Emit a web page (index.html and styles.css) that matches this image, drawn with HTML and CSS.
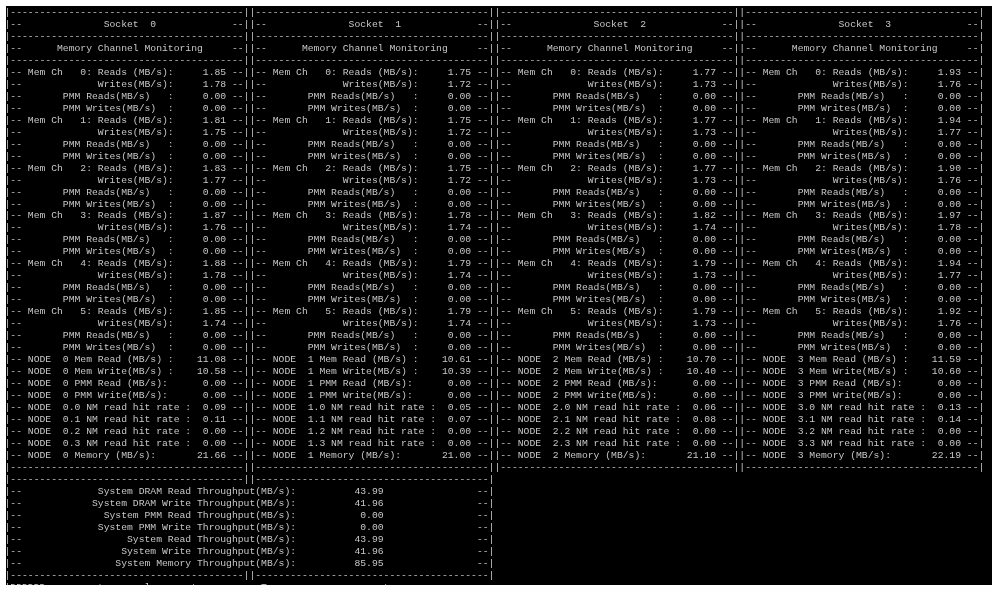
FILE: index.html
```html
<!DOCTYPE html>
<html lang="en">
<head>
<meta charset="utf-8">
<title>pcm-memory</title>
<link rel="stylesheet" href="styles.css">
</head>
<body>
<main class="screen">
<pre class="output">|----------------------------------------||----------------------------------------||----------------------------------------||----------------------------------------|
|--              Socket  0             --||--              Socket  1             --||--              Socket  2             --||--              Socket  3             --|
|----------------------------------------||----------------------------------------||----------------------------------------||----------------------------------------|
|--      Memory Channel Monitoring     --||--      Memory Channel Monitoring     --||--      Memory Channel Monitoring     --||--      Memory Channel Monitoring     --|
|----------------------------------------||----------------------------------------||----------------------------------------||----------------------------------------|
|-- Mem Ch   0: Reads (MB/s):     1.85 --||-- Mem Ch   0: Reads (MB/s):     1.75 --||-- Mem Ch   0: Reads (MB/s):     1.77 --||-- Mem Ch   0: Reads (MB/s):     1.93 --|
|--             Writes(MB/s):     1.78 --||--             Writes(MB/s):     1.72 --||--             Writes(MB/s):     1.73 --||--             Writes(MB/s):     1.76 --|
|--       PMM Reads(MB/s)   :     0.00 --||--       PMM Reads(MB/s)   :     0.00 --||--       PMM Reads(MB/s)   :     0.00 --||--       PMM Reads(MB/s)   :     0.00 --|
|--       PMM Writes(MB/s)  :     0.00 --||--       PMM Writes(MB/s)  :     0.00 --||--       PMM Writes(MB/s)  :     0.00 --||--       PMM Writes(MB/s)  :     0.00 --|
|-- Mem Ch   1: Reads (MB/s):     1.81 --||-- Mem Ch   1: Reads (MB/s):     1.75 --||-- Mem Ch   1: Reads (MB/s):     1.77 --||-- Mem Ch   1: Reads (MB/s):     1.94 --|
|--             Writes(MB/s):     1.75 --||--             Writes(MB/s):     1.72 --||--             Writes(MB/s):     1.73 --||--             Writes(MB/s):     1.77 --|
|--       PMM Reads(MB/s)   :     0.00 --||--       PMM Reads(MB/s)   :     0.00 --||--       PMM Reads(MB/s)   :     0.00 --||--       PMM Reads(MB/s)   :     0.00 --|
|--       PMM Writes(MB/s)  :     0.00 --||--       PMM Writes(MB/s)  :     0.00 --||--       PMM Writes(MB/s)  :     0.00 --||--       PMM Writes(MB/s)  :     0.00 --|
|-- Mem Ch   2: Reads (MB/s):     1.83 --||-- Mem Ch   2: Reads (MB/s):     1.75 --||-- Mem Ch   2: Reads (MB/s):     1.77 --||-- Mem Ch   2: Reads (MB/s):     1.90 --|
|--             Writes(MB/s):     1.77 --||--             Writes(MB/s):     1.72 --||--             Writes(MB/s):     1.73 --||--             Writes(MB/s):     1.76 --|
|--       PMM Reads(MB/s)   :     0.00 --||--       PMM Reads(MB/s)   :     0.00 --||--       PMM Reads(MB/s)   :     0.00 --||--       PMM Reads(MB/s)   :     0.00 --|
|--       PMM Writes(MB/s)  :     0.00 --||--       PMM Writes(MB/s)  :     0.00 --||--       PMM Writes(MB/s)  :     0.00 --||--       PMM Writes(MB/s)  :     0.00 --|
|-- Mem Ch   3: Reads (MB/s):     1.87 --||-- Mem Ch   3: Reads (MB/s):     1.78 --||-- Mem Ch   3: Reads (MB/s):     1.82 --||-- Mem Ch   3: Reads (MB/s):     1.97 --|
|--             Writes(MB/s):     1.76 --||--             Writes(MB/s):     1.74 --||--             Writes(MB/s):     1.74 --||--             Writes(MB/s):     1.78 --|
|--       PMM Reads(MB/s)   :     0.00 --||--       PMM Reads(MB/s)   :     0.00 --||--       PMM Reads(MB/s)   :     0.00 --||--       PMM Reads(MB/s)   :     0.00 --|
|--       PMM Writes(MB/s)  :     0.00 --||--       PMM Writes(MB/s)  :     0.00 --||--       PMM Writes(MB/s)  :     0.00 --||--       PMM Writes(MB/s)  :     0.00 --|
|-- Mem Ch   4: Reads (MB/s):     1.88 --||-- Mem Ch   4: Reads (MB/s):     1.79 --||-- Mem Ch   4: Reads (MB/s):     1.79 --||-- Mem Ch   4: Reads (MB/s):     1.94 --|
|--             Writes(MB/s):     1.78 --||--             Writes(MB/s):     1.74 --||--             Writes(MB/s):     1.73 --||--             Writes(MB/s):     1.77 --|
|--       PMM Reads(MB/s)   :     0.00 --||--       PMM Reads(MB/s)   :     0.00 --||--       PMM Reads(MB/s)   :     0.00 --||--       PMM Reads(MB/s)   :     0.00 --|
|--       PMM Writes(MB/s)  :     0.00 --||--       PMM Writes(MB/s)  :     0.00 --||--       PMM Writes(MB/s)  :     0.00 --||--       PMM Writes(MB/s)  :     0.00 --|
|-- Mem Ch   5: Reads (MB/s):     1.85 --||-- Mem Ch   5: Reads (MB/s):     1.79 --||-- Mem Ch   5: Reads (MB/s):     1.79 --||-- Mem Ch   5: Reads (MB/s):     1.92 --|
|--             Writes(MB/s):     1.74 --||--             Writes(MB/s):     1.74 --||--             Writes(MB/s):     1.73 --||--             Writes(MB/s):     1.76 --|
|--       PMM Reads(MB/s)   :     0.00 --||--       PMM Reads(MB/s)   :     0.00 --||--       PMM Reads(MB/s)   :     0.00 --||--       PMM Reads(MB/s)   :     0.00 --|
|--       PMM Writes(MB/s)  :     0.00 --||--       PMM Writes(MB/s)  :     0.00 --||--       PMM Writes(MB/s)  :     0.00 --||--       PMM Writes(MB/s)  :     0.00 --|
|-- NODE  0 Mem Read (MB/s) :    11.08 --||-- NODE  1 Mem Read (MB/s) :    10.61 --||-- NODE  2 Mem Read (MB/s) :    10.70 --||-- NODE  3 Mem Read (MB/s) :    11.59 --|
|-- NODE  0 Mem Write(MB/s) :    10.58 --||-- NODE  1 Mem Write(MB/s) :    10.39 --||-- NODE  2 Mem Write(MB/s) :    10.40 --||-- NODE  3 Mem Write(MB/s) :    10.60 --|
|-- NODE  0 PMM Read (MB/s):      0.00 --||-- NODE  1 PMM Read (MB/s):      0.00 --||-- NODE  2 PMM Read (MB/s):      0.00 --||-- NODE  3 PMM Read (MB/s):      0.00 --|
|-- NODE  0 PMM Write(MB/s):      0.00 --||-- NODE  1 PMM Write(MB/s):      0.00 --||-- NODE  2 PMM Write(MB/s):      0.00 --||-- NODE  3 PMM Write(MB/s):      0.00 --|
|-- NODE  0.0 NM read hit rate :  0.09 --||-- NODE  1.0 NM read hit rate :  0.05 --||-- NODE  2.0 NM read hit rate :  0.06 --||-- NODE  3.0 NM read hit rate :  0.13 --|
|-- NODE  0.1 NM read hit rate :  0.11 --||-- NODE  1.1 NM read hit rate :  0.07 --||-- NODE  2.1 NM read hit rate :  0.08 --||-- NODE  3.1 NM read hit rate :  0.14 --|
|-- NODE  0.2 NM read hit rate :  0.00 --||-- NODE  1.2 NM read hit rate :  0.00 --||-- NODE  2.2 NM read hit rate :  0.00 --||-- NODE  3.2 NM read hit rate :  0.00 --|
|-- NODE  0.3 NM read hit rate :  0.00 --||-- NODE  1.3 NM read hit rate :  0.00 --||-- NODE  2.3 NM read hit rate :  0.00 --||-- NODE  3.3 NM read hit rate :  0.00 --|
|-- NODE  0 Memory (MB/s):       21.66 --||-- NODE  1 Memory (MB/s):       21.00 --||-- NODE  2 Memory (MB/s):       21.10 --||-- NODE  3 Memory (MB/s):       22.19 --|
|----------------------------------------||----------------------------------------||----------------------------------------||----------------------------------------|
|----------------------------------------||----------------------------------------|
|--             System DRAM Read Throughput(MB/s):          43.99                --|
|--            System DRAM Write Throughput(MB/s):          41.96                --|
|--              System PMM Read Throughput(MB/s):           0.00                --|
|--             System PMM Write Throughput(MB/s):           0.00                --|
|--                  System Read Throughput(MB/s):          43.99                --|
|--                 System Write Throughput(MB/s):          41.96                --|
|--                System Memory Throughput(MB/s):          85.95                --|
|----------------------------------------||----------------------------------------|
|DDDDDD         t       l       t           T                    t</pre>
</main>
</body>
</html>
```
FILE: styles.css
```css
html, body {
  margin: 0;
  padding: 0;
  background: #fff;
}

body {
  padding: 6px 5px 7px 6px;
  height: 592px;
  box-sizing: border-box;
  overflow: hidden;
}

.screen {
  height: 579px;
  background: #000;
  overflow: hidden;
}

.output {
  margin: 1px 0 0 -1.5px;
  font-family: "Liberation Mono", "Courier New", monospace;
  font-size: 9.72px;
  line-height: 11.97px;
  color: #c8c8c8;
  white-space: pre;
  filter: blur(0.3px);
}
```
